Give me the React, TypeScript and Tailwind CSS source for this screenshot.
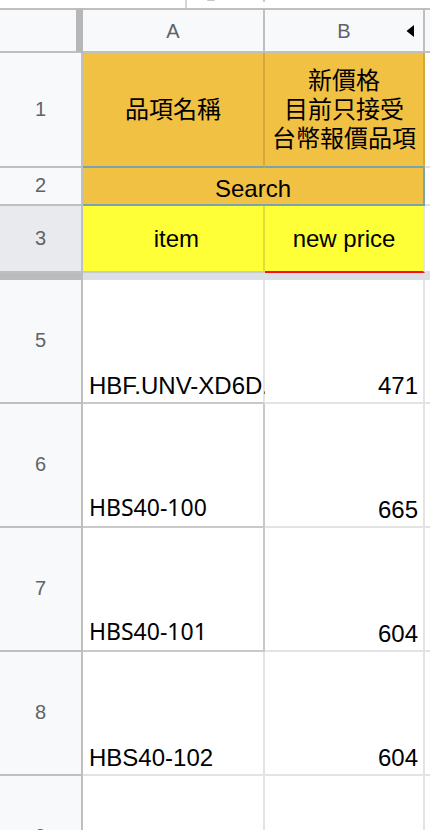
import type { ReactNode } from "react";
import { clsx } from "clsx";

interface ItemRow {
  row: number;
  item: string;
  price: number;
  humanist?: boolean;
  itemBorder: string;
}

const ITEMS: ItemRow[] = [
  { row: 5, item: "HBF.UNV-XD6D.", price: 471, itemBorder: "border-r-[#e2e3e3] border-b-[#c9c9c9]" },
  { row: 6, item: "HBS40-100", price: 665, humanist: true, itemBorder: "border-[#c9c9c9]" },
  { row: 7, item: "HBS40-101", price: 604, humanist: true, itemBorder: "border-[#c9c9c9]" },
  { row: 8, item: "HBS40-102", price: 604, itemBorder: "border-[#e2e3e3]" },
];

function RowHeader({ children, active }: { children: ReactNode; active?: boolean }) {
  return (
    <th
      scope="row"
      className={clsx(
        "border-r-2 border-b-2 border-[#bfbfbf] px-0 pt-0 pb-0.5 text-center align-middle text-xl font-normal text-[#5f6368]",
        active ? "bg-[#e8eaee]" : "bg-[#f8f9fb]",
      )}
    >
      {children}
    </th>
  );
}

function ColumnHeader({ children }: { children?: ReactNode }) {
  return (
    <th
      scope="col"
      className="border-y-2 border-r-2 border-[#bfbfbf] bg-[#f8f9fb] p-0 text-center align-middle text-xl font-normal text-[#5f6368] last:border-r-0"
    >
      {children}
    </th>
  );
}

/** Sliver of the formula bar that is still visible above the grid. */
function FormulaBarEdge() {
  return (
    <div className="flex h-2 items-start">
      <div className="h-2 w-[187px] border-r-2 border-[#d5d5d5]" />
      <div className="ml-5 h-px w-2 rounded-b-full bg-[#c8c8c8]" />
      <div className="ml-12 h-0.5 w-0.5 bg-[#c8c8c8]" />
    </div>
  );
}

function EmptyCell() {
  return <td className="border-b-2 border-[#e2e3e3] p-0" />;
}

export default function App() {
  return (
    <main className="h-screen overflow-hidden bg-white font-['Liberation_Sans','Noto_Sans_CJK_TC',sans-serif] text-2xl leading-7 text-black">
      <FormulaBarEdge />
      <table className="w-full table-fixed border-separate border-spacing-0">
        <colgroup>
          <col className="w-[83px]" />
          <col className="w-[182px]" />
          <col className="w-[160px]" />
          <col />
        </colgroup>
        <thead>
          <tr className="h-[45px]">
            <td className="border-y-2 border-r-[7px] border-y-[#bfbfbf] border-r-[#b7b7b7] bg-[#f8f9fb] p-0" />
            <ColumnHeader>A</ColumnHeader>
            <ColumnHeader>
              <div className="grid grid-cols-[1fr_auto_1fr] items-center">
                <span className="col-start-2">B</span>
                <button type="button" aria-label="Show hidden columns" className="mr-[9px] justify-self-end">
                  <svg width="8" height="14" viewBox="0 0 8 14" className="block">
                    <path d="M8 1v12L0.5 7z" fill="#000" />
                  </svg>
                </button>
              </div>
            </ColumnHeader>
            <ColumnHeader />
          </tr>
        </thead>
        <tbody>
          <tr className="h-[115px]">
            <RowHeader>1</RowHeader>
            <td className="border-r-2 border-b-2 border-r-[#d3a93d] border-b-[#76a5af] bg-[#f1c143] p-0 text-center align-middle">
              品項名稱
            </td>
            <td className="border-r-2 border-b-2 border-r-[#d3a93d] border-b-[#76a5af] bg-[#f1c143] p-0 text-center align-middle leading-[29px]">
              新價格
              <br />
              目前只接受
              <br />
              台幣報價品項
            </td>
            <EmptyCell />
          </tr>
          <tr className="h-[38px]">
            <RowHeader>2</RowHeader>
            <td colSpan={2} className="border-r-2 border-b-2 border-[#76a5af] bg-[#f1c143] p-0 pb-px text-center align-bottom">
              Search
            </td>
            <EmptyCell />
          </tr>
          <tr className="h-[67px]">
            <RowHeader active>3</RowHeader>
            <td className="border-r-2 border-b-2 border-r-[#dede3a] border-b-[#c9c9c9] bg-[#ffff38] p-0 text-center align-middle">
              {"\u00a0item"}
            </td>
            <td className="border-r-2 border-b-2 border-r-[#e2e3e3] border-b-[#f5131c] bg-[#ffff38] p-0 text-center align-middle">
              new price
            </td>
            <td className="border-b-2 border-[#dadfe8] p-0" />
          </tr>
          {/* Frozen rows divider */}
          <tr className="h-[7px]" aria-hidden="true">
            <td className="bg-[#bcbcbc] p-0" />
            <td colSpan={3} className="bg-[#dadfe8] p-0" />
          </tr>
          {ITEMS.map(({ row, item, price, humanist, itemBorder }) => (
            <tr key={row} className="h-[124px]">
              <RowHeader>{row}</RowHeader>
              <td
                className={clsx(
                  "border-r-2 border-b-2 pt-0 pr-0 pl-1.5 align-bottom whitespace-nowrap",
                  itemBorder,
                  humanist ? "pb-[5px] font-['Noto_Sans',sans-serif] text-[23px]" : "pb-0.5",
                )}
              >
                {/* long names run on over the grid line, up to the next cell */}
                <div className="-mr-0.5 overflow-x-clip">{item}</div>
              </td>
              <td className="border-r-2 border-b-2 border-[#e2e3e3] px-[5px] pt-0 pb-0.5 text-right align-bottom">{price}</td>
              <EmptyCell />
            </tr>
          ))}
          <tr className="h-[124px]">
            <RowHeader>9</RowHeader>
            <td className="border-r-2 border-b-2 border-[#e2e3e3] p-0" />
            <td className="border-r-2 border-b-2 border-[#e2e3e3] p-0" />
            <EmptyCell />
          </tr>
        </tbody>
      </table>
    </main>
  );
}
